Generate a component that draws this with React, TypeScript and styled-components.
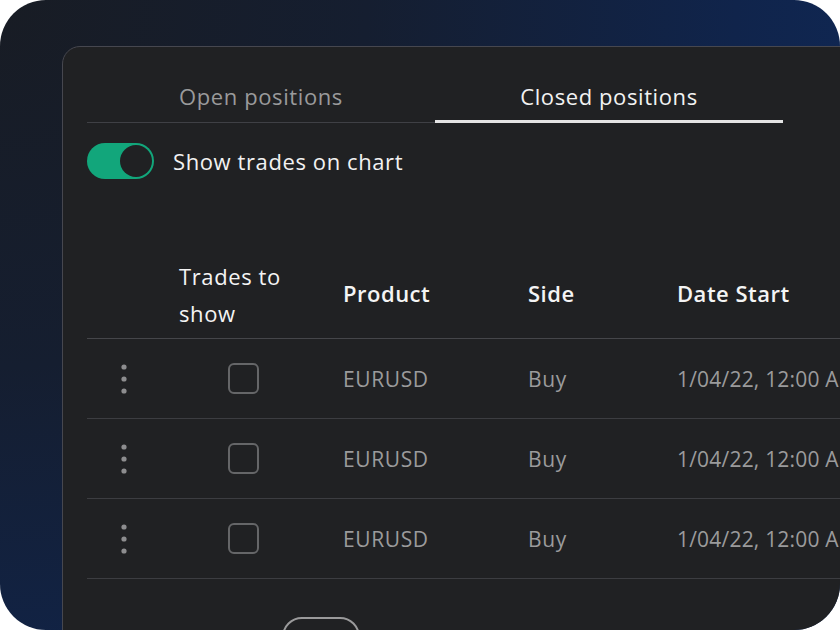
import React from 'react';
import styled, { createGlobalStyle } from 'styled-components';

const GlobalStyle = createGlobalStyle`
  html, body {
    margin: 0;
    padding: 0;
    background: #ffffff;
  }
  body {
    font-family: 'Open Sans', 'Noto Sans', sans-serif;
    letter-spacing: 0.6px;
  }
`;

const Frame = styled.div`
  width: 840px;
  height: 630px;
  overflow: hidden;
  border-radius: 46px;
  padding: 46px 0 0 62px;
  box-sizing: border-box;
  display: flex;
  background: radial-gradient(circle at 0 0, #181c24 0%, #151e30 35%, #10244b 70%, #0f2a5c 100%);
`;

const Panel = styled.section`
  flex-shrink: 0;
  width: 880px;
  min-height: 640px;
  box-sizing: border-box;
  padding: 0 0 0 24px;
  background: #202123;
  border: 1px solid #46474f;
  border-radius: 18px;
  display: flex;
  flex-direction: column;
`;

const Tabs = styled.div`
  display: flex;
  width: 696px;
  margin-top: 32px;
  border-bottom: 1px solid #3f4045;
`;

const Tab = styled.div<{ active?: boolean }>`
  flex: 1;
  text-align: center;
  font-size: 22px;
  height: 44px;
  line-height: 35px;
  margin-bottom: -1px;
  box-sizing: border-box;
  color: ${(p) => (p.active ? '#f2f2f2' : '#9a9a9b')};
  border-bottom: 3px solid ${(p) => (p.active ? '#e4e4e4' : 'transparent')};
`;

const ToggleRow = styled.label`
  display: flex;
  align-items: center;
  gap: 19px;
  margin-top: 20px;
  color: #f2f2f2;
  font-size: 22px;
`;

const Switch = styled.span`
  width: 67px;
  height: 36px;
  border-radius: 18px;
  background: #12a67b;
  display: flex;
  align-items: center;
  justify-content: flex-end;
  padding: 2px;
  box-sizing: border-box;
`;

const Knob = styled.span`
  width: 32px;
  height: 32px;
  border-radius: 50%;
  background: #202123;
`;

const Table = styled.div`
  margin-top: 64px;
  display: flex;
  flex-direction: column;
`;

const Row = styled.div<{ head?: boolean }>`
  display: grid;
  grid-template-columns: 74px 164px 185px 149px 1fr;
  align-items: center;
  height: ${(p) => (p.head ? '96px' : '80px')};
  border-bottom: 1px solid ${(p) => (p.head ? '#45464a' : '#3c3d41')};
  box-sizing: border-box;
  white-space: nowrap;
`;

const HeadCell = styled.div`
  padding: 5px 0 0 18px;
  color: #f4f4f4;
  font-size: 22px;
  font-weight: 600;
  letter-spacing: 0.5px;
  line-height: 37px;
  white-space: normal;
`;

const TradesHead = styled(HeadCell)`
  font-weight: 400;
  letter-spacing: 0.6px;
  width: 124px;
  padding-top: 8px;
`;

const Cell = styled.div<{ tight?: boolean }>`
  padding-left: 18px;
  color: #9b9b9c;
  font-size: 21px;
  letter-spacing: ${(p) => (p.tight ? '0.2px' : '0.6px')};
`;

const MenuCell = styled.div`
  display: flex;
  justify-content: center;
`;

const CheckCell = styled.div`
  display: flex;
  justify-content: center;
`;

const Checkbox = styled.span`
  width: 31px;
  height: 31px;
  border: 2px solid #656668;
  border-radius: 6px;
  box-sizing: border-box;
`;

const Footer = styled.div`
  display: flex;
  padding: 38px 0 0 195px;
`;

const PageButton = styled.div`
  width: 78px;
  height: 40px;
  border: 2px solid #9a9a9b;
  border-radius: 20px;
  box-sizing: border-box;
`;

const Dots = () => (
  <svg width="8" height="32" viewBox="0 0 8 32">
    <circle cx="4" cy="4" r="2.6" fill="#8d8d8f" />
    <circle cx="4" cy="16" r="2.6" fill="#8d8d8f" />
    <circle cx="4" cy="28" r="2.6" fill="#8d8d8f" />
  </svg>
);

const trades = [
  { product: 'EURUSD', side: 'Buy', date: '1/04/22, 12:00 AM' },
  { product: 'EURUSD', side: 'Buy', date: '1/04/22, 12:00 AM' },
  { product: 'EURUSD', side: 'Buy', date: '1/04/22, 12:00 AM' },
];

export default function App() {
  return (
    <>
      <GlobalStyle />
      <Frame>
        <Panel>
          <Tabs>
            <Tab>Open positions</Tab>
            <Tab active>Closed positions</Tab>
          </Tabs>
          <ToggleRow>
            <Switch>
              <Knob />
            </Switch>
            Show trades on chart
          </ToggleRow>
          <Table>
            <Row head>
              <div />
              <TradesHead>Trades to show</TradesHead>
              <HeadCell>Product</HeadCell>
              <HeadCell>Side</HeadCell>
              <HeadCell>Date Start</HeadCell>
            </Row>
            {trades.map((t, i) => (
              <Row key={i}>
                <MenuCell>
                  <Dots />
                </MenuCell>
                <CheckCell>
                  <Checkbox />
                </CheckCell>
                <Cell>{t.product}</Cell>
                <Cell>{t.side}</Cell>
                <Cell tight>{t.date}</Cell>
              </Row>
            ))}
          </Table>
          <Footer>
            <PageButton />
          </Footer>
        </Panel>
      </Frame>
    </>
  );
}
